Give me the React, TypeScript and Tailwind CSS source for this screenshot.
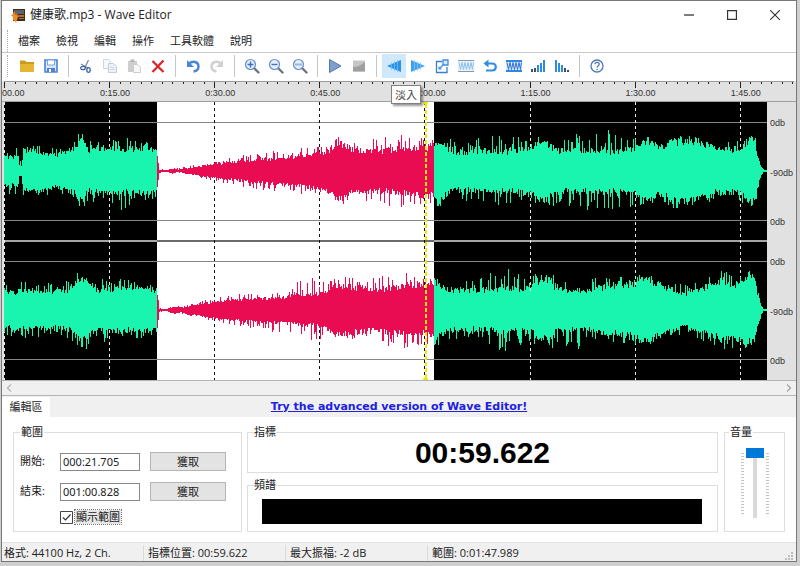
import { ReactNode } from "react";

const WIDTH = 763;
const HEIGHT = 278;
const MAJOR = 105.1;
const SELECTION = { from: 153, to: 430 };
const CURSOR = 421;

const LABELS = [
  "00.00",
  "0:15.00",
  "0:30.00",
  "0:45.00",
  "1:00.00",
  "1:15.00",
  "1:30.00",
  "1:45.00",
];

// [x, body, peak] half heights of the signal
type Key = [number, number, number];

const LEFT: Key[] = [
  [0, 14, 23],
  [1, 12, 23],
  [14, 13, 23],
  [15, 4, 12],
  [17, 4, 14],
  [19, 17, 24],
  [30, 18, 28],
  [52, 14, 22],
  [70, 19, 30],
  [77, 27, 42],
  [84, 18, 32],
  [100, 20, 28],
  [118, 19, 40],
  [130, 20, 30],
  [145, 20, 32],
  [152, 18, 26],
  [153, 14, 18],
  [155, 1, 2],
  [162, 1, 1],
  [168, 2, 3],
  [174, 1, 3],
  [200, 5, 8],
  [230, 8, 15],
  [260, 10, 20],
  [300, 14, 23],
  [322, 17, 25],
  [334, 25, 36],
  [350, 18, 30],
  [375, 17, 33],
  [395, 20, 38],
  [425, 21, 32],
  [436, 24, 38],
  [452, 16, 28],
  [480, 18, 35],
  [505, 17, 37],
  [525, 21, 33],
  [540, 25, 40],
  [555, 18, 32],
  [580, 18, 40],
  [610, 17, 42],
  [630, 20, 35],
  [643, 28, 35],
  [655, 20, 27],
  [668, 26, 38],
  [690, 27, 38],
  [712, 19, 30],
  [735, 19, 30],
  [745, 28, 38],
  [751, 27, 38],
  [753, 14, 20],
  [757, 4, 5],
  [759, 1, 2],
  [763, 1, 1],
];

const RIGHT: Key[] = [
  [0, 15, 25],
  [20, 17, 29],
  [52, 16, 26],
  [68, 18, 32],
  [72, 25, 38],
  [82, 24, 40],
  [90, 18, 30],
  [100, 17, 32],
  [116, 19, 38],
  [125, 18, 30],
  [152, 18, 28],
  [153, 14, 18],
  [155, 1, 2],
  [162, 1, 1],
  [170, 3, 4],
  [178, 2, 4],
  [200, 6, 10],
  [230, 9, 15],
  [255, 10, 20],
  [285, 12, 27],
  [315, 14, 34],
  [322, 16, 26],
  [332, 21, 36],
  [350, 20, 32],
  [370, 18, 33],
  [390, 20, 40],
  [420, 21, 36],
  [432, 23, 40],
  [445, 18, 32],
  [465, 17, 30],
  [500, 18, 42],
  [528, 19, 36],
  [534, 26, 40],
  [546, 26, 40],
  [552, 18, 34],
  [580, 17, 42],
  [600, 20, 32],
  [625, 22, 34],
  [643, 27, 36],
  [660, 20, 27],
  [680, 14, 26],
  [700, 20, 32],
  [718, 26, 40],
  [730, 22, 38],
  [740, 30, 40],
  [750, 28, 40],
  [753, 15, 22],
  [757, 4, 5],
  [759, 1, 2],
  [763, 1, 1],
];

function envelope(keys: Key[], x: number) {
  let i = 1;
  while (i < keys.length - 1 && keys[i][0] < x) i++;
  const a = keys[i - 1];
  const b = keys[i];
  const t = Math.min(1, (x - a[0]) / (b[0] - a[0]));
  return [a[1] + (b[1] - a[1]) * t, a[2] + (b[2] - a[2]) * t];
}

function wavePath(keys: Key[], center: number, start: number, end: number, seed: number) {
  let state = seed + start;
  const random = () => {
    state = (state * 1103515245 + 12345) % 2147483648;
    return (state >> 8) / 8388608;
  };
  const level = (x: number) => {
    const [body, peak] = envelope(keys, x);
    if (random() < 0.38) return body + (peak - body) * random();
    return body * (0.95 + random() * 0.35);
  };
  let d = "";
  for (let x = start; x < end; x++) {
    const top = Math.max(1, Math.round(level(x)));
    const bottom = Math.max(1, Math.round(level(x)));
    d += `M${x} ${center - top}h1v${top + bottom}h-1z`;
  }
  return d;
}

const SECTIONS = [
  { start: 0, end: SELECTION.from, className: "fill-[#19f5ae]" },
  { start: SELECTION.from, end: SELECTION.to, className: "fill-[#e90c52]" },
  { start: SELECTION.to, end: WIDTH, className: "fill-[#19f5ae]" },
];

function Waveform() {
  return (
    <svg
      viewBox={`0 0 ${WIDTH} ${HEIGHT}`}
      preserveAspectRatio="none"
      className="block h-[278px] w-full min-w-0 flex-1"
    >
      <rect width={WIDTH} height={HEIGHT} fill="#000" />
      <rect
        x={SELECTION.from}
        width={SELECTION.to - SELECTION.from}
        height={HEIGHT}
        fill="#fff"
      />
      {[20, 118, 159, 257].map((y) => (
        <path key={y} d={`M0 ${y + 0.5}H${WIDTH}`} stroke="#85858a" />
      ))}
      <path d={`M0 139H${WIDTH}`} stroke="#a6a6a6" strokeWidth="2" />
      <path
        d={`M${SELECTION.from} 139H${SELECTION.to}`}
        stroke="#6b6b6b"
        strokeWidth="2"
      />
      {LABELS.map((label, i) => {
        const x = Math.round(i * MAJOR);
        const selected = x > SELECTION.from && x < SELECTION.to;
        return (
          <path
            key={label}
            d={`M${x + 0.5} 0V${HEIGHT}`}
            stroke={selected ? "#111" : "#e8e8e8"}
            strokeDasharray="3 3"
          />
        );
      })}
      {SECTIONS.map(({ start, end, className }) => (
        <g key={start} className={className}>
          <path d={wavePath(LEFT, 69, start, end, 71)} />
          <path d={wavePath(RIGHT, 208, start, end, 997)} />
        </g>
      ))}
      <path
        d={`M${CURSOR + 1} 0V${HEIGHT}`}
        stroke="#f0e800"
        strokeWidth="2"
        strokeDasharray="4 2"
        strokeDashoffset="-2"
      />
      <path d={`M${CURSOR - 2} 0h5v1l-2 2h-1l-2-2z`} fill="#f0e800" />
      <path d={`M${CURSOR - 2} ${HEIGHT}h5v-1l-2-2h-1l-2 2z`} fill="#f0e800" />
    </svg>
  );
}

function Ruler() {
  const ticks = Array.from({ length: 76 }, (_, i) => i);
  return (
    <div className="flex border-b border-[#a0a0a0] bg-[#e1e1e1] pr-[29px] pl-0.5">
      <div className="relative h-5 flex-1">
        <svg
          viewBox={`0 0 ${WIDTH} 20`}
          preserveAspectRatio="none"
          className="block h-5 w-full overflow-visible"
        >
          <path d="M0 .5H790" stroke="#9c9c9c" />
          {ticks.map((i) => (
            <rect
              key={i}
              x={Math.round((i * MAJOR) / 10)}
              y={1}
              width={1}
              height={i % 10 ? 2 : 6}
              fill="#222"
            />
          ))}
        </svg>
        {LABELS.map((label, i) => (
          <span
            key={label}
            className={`absolute top-1.5 font-['Liberation_Sans',sans-serif] text-[9px] leading-3 text-[#333] ${
              i === 0 ? "-ml-0.5" : "-ml-[9px]"
            }`}
            style={{ left: `${((i * MAJOR) / WIDTH) * 100}%` }}
          >
            {label}
          </span>
        ))}
      </div>
    </div>
  );
}

function Scale() {
  return (
    <div className="w-7 bg-[#e1e1e1] font-['Liberation_Sans',sans-serif] text-[9px] leading-3 text-[#333]">
      {["left", "right"].map((channel) => (
        <div key={channel} className="flex h-[139px] flex-col justify-between pt-[15px] pb-[13px] pl-[3px]">
          <span>0db</span>
          <span>-90db</span>
          <span>0db</span>
        </div>
      ))}
    </div>
  );
}

interface ToolProps {
  label: string;
  active?: boolean;
  children: ReactNode;
}

function Tool({ label, active, children }: ToolProps) {
  return (
    <button
      aria-label={label}
      className={`relative flex h-6 w-6 shrink-0 items-center justify-center ${
        active ? "bg-[#cfe8fb]" : ""
      }`}
    >
      <svg viewBox="0 0 16 16" className="h-4 w-4" fill="none">
        {children}
      </svg>
      {active && (
        <span className="absolute top-[31px] left-[9px] z-10 border border-[#808080] bg-white px-[3px] text-[11px] leading-[17px] whitespace-nowrap text-[#444] shadow-[2px_2px_2px_rgba(0,0,0,0.4)]">
          {label}
        </span>
      )}
    </button>
  );
}

function Separator() {
  return <span className="mx-[5px] h-[22px] w-px shrink-0 bg-[#c6c6c6]" />;
}

function Magnifier({ children }: { children?: ReactNode }) {
  return (
    <>
      <path d="M10.5 10.5l4 4" stroke="#6b7683" strokeWidth="2.4" strokeLinecap="round" />
      <circle cx="6.5" cy="6.5" r="5" fill="#e6f0fc" stroke="#6a8fc6" strokeWidth="1.2" />
      {children}
    </>
  );
}

function Zigzag({ color }: { color: string }) {
  return (
    <path
      d="M1 4.5l1.5 7 1.5-7 1.5 7 1.5-7 1.5 7 1.5-7 1.5 7 1.5-7 1.5 7 1-7"
      stroke={color}
    />
  );
}

function Grip() {
  return <span className="h-[22px] w-[3px] shrink-0 border-l border-dotted border-[#a8a8a8]" />;
}

function Toolbar() {
  return (
    <div className="flex h-7 items-center pb-0.5 pl-[5px]">
      <Grip />
      <div className="flex items-center pl-[5px]">
        <Tool label="開啟">
          <path d="M1 2.5h5L7.5 4H15v10H1z" fill="#cf9a1c" />
          <path d="M1 6h14v8H1z" fill="#e6b533" />
        </Tool>
        <Tool label="儲存">
          <path d="M2 2h12v12H2z" fill="#dbe8fb" stroke="#4b82d8" strokeWidth="1.6" />
          <path d="M4.5 2h7v5h-7z" fill="#fff" stroke="#7aa5e6" />
          <path d="M4 10h8v4H4z" fill="#4b82d8" />
          <path d="M6 11h2v3H6z" fill="#fff" />
        </Tool>
        <Separator />
        <Tool label="剪下">
          <path d="M10.5 2L7 9.5M3 6l7 4" stroke="#7c8ba1" strokeWidth="1.3" />
          <ellipse cx="5" cy="10" rx="2.3" ry="1.7" stroke="#3d64a8" strokeWidth="1.3" />
          <ellipse cx="10.5" cy="12" rx="1.7" ry="2.4" stroke="#3d64a8" strokeWidth="1.3" />
        </Tool>
        <Tool label="複製">
          <path d="M1.5 1.5h5l2 2v7h-7z" fill="#f6f8fb" stroke="#cdd5e2" />
          <path d="M6.5 5.5h5l3 3v6h-8z" fill="#eef2f8" stroke="#c2cddd" />
          <path d="M8 9.5h4M8 11.5h5" stroke="#cdd8e8" />
        </Tool>
        <Tool label="貼上">
          <path d="M2 3h9v11H2z" fill="#cfcfcf" />
          <path d="M4.5 1.5h4V4h-4z" fill="#b5b5b5" />
          <path d="M7.5 6.5h4l3 3v5h-7z" fill="#f7f7f7" stroke="#cdcdcd" />
        </Tool>
        <Tool label="刪除">
          <path d="M2.5 3l11 11M13.5 2.5L2.5 14" stroke="#d9262c" strokeWidth="2.3" />
        </Tool>
        <Separator />
        <Tool label="復原">
          <path d="M4 5.5c4-3.5 9.5-1.5 9.5 3 0 3-2 4.5-5 5" stroke="#4a86d6" strokeWidth="2.4" />
          <path d="M2 2v7h7z" fill="#4a86d6" />
        </Tool>
        <Tool label="重做">
          <path d="M12 5.5c-4-3.5-9.5-1.5-9.5 3 0 3 2 4.5 5 5" stroke="#d0d0d0" strokeWidth="2.4" />
          <path d="M14 2v7H7z" fill="#d0d0d0" />
        </Tool>
        <Separator />
        <Tool label="放大">
          <Magnifier>
            <path d="M3.5 6.5h6M6.5 3.5v6" stroke="#3d6fc4" strokeWidth="1.4" />
          </Magnifier>
        </Tool>
        <Tool label="縮小">
          <Magnifier>
            <path d="M3.5 6.5h6" stroke="#3d6fc4" strokeWidth="1.4" />
          </Magnifier>
        </Tool>
        <Tool label="全部顯示">
          <Magnifier>
            <path d="M3 5.5h7v2H3z" fill="#9db4dc" />
          </Magnifier>
        </Tool>
        <Separator />
        <Tool label="播放">
          <path d="M2.5 1.5L14 8 2.5 14.5z" fill="#7f9fce" stroke="#5677aa" />
        </Tool>
        <Tool label="停止">
          <path d="M2 2.5h12v11H2z" fill="#c6c6c6" />
          <path d="M2 13.5V9c5 0 8-2 12-5v9.5z" fill="#9f9f9f" />
        </Tool>
        <Separator />
        <Tool label="淡入" active>
          <path d="M1 8l14-6v12z" fill="#2b93e6" />
          <path d="M5.5 4v8M8.5 3v10M11.5 2v12" stroke="#7cc0f4" strokeWidth=".7" />
        </Tool>
        <Tool label="淡出">
          <path d="M15 8L1 2v12z" fill="#3fa2ee" />
          <path d="M10.5 4v8M7.5 3v10M4.5 2v12" stroke="#8ccaf7" strokeWidth=".7" />
        </Tool>
        <Tool label="插入">
          <path d="M8 3.5H2.5v11H13V9" stroke="#3b7fc9" strokeWidth="1.3" />
          <path d="M9 2h5v5H9z" fill="#d8ecff" stroke="#3b8fe0" strokeWidth="1.3" />
          <path d="M9 7l-3 3" stroke="#3b8fe0" strokeWidth="1.3" />
          <path d="M4.5 8v3.5H8z" fill="#3b8fe0" />
        </Tool>
        <Tool label="靜音">
          <path d="M0 2.5h16M0 13.5h16" stroke="#8b98a6" />
          <path d="M0 3h16v10H0z" fill="#e6f2fc" />
          <Zigzag color="#8cc0ec" />
        </Tool>
        <Tool label="反轉">
          <path d="M3 5.5h7c5 0 5 7 0 7H4" stroke="#2f8fe0" strokeWidth="2.2" />
          <path d="M6.5 1.5v8l-5-4z" fill="#2f8fe0" />
        </Tool>
        <Tool label="正常化">
          <path d="M0 2h16v12H0z" fill="#2f86e4" />
          <path d="M0 4h16v8H0z" fill="#d8eafc" />
          <Zigzag color="#2f6fd0" />
        </Tool>
        <Tool label="提高音量">
          <path d="M1 11h2v3H1zM4 10h2v4H4z" fill="#3c4f66" />
          <path d="M7 7h2v7H7zM10 5h2v9h-2zM13 2h2v12h-2z" fill="#2f8be0" />
        </Tool>
        <Tool label="降低音量">
          <path d="M1 2h2v12H1zM4 5h2v9H4zM7 7h2v7H7z" fill="#2f8be0" />
          <path d="M10 10h2v4h-2zM13 12h2v2h-2z" fill="#3c4f66" />
        </Tool>
        <Separator />
        <Tool label="說明">
          <circle cx="8" cy="8" r="6" stroke="#4a79ba" strokeWidth="1.3" />
          <path d="M6 6.3c0-2.6 4.2-2.6 4.2 0 0 1.5-2.1 1.5-2.1 3.3" stroke="#4a79ba" strokeWidth="1.3" />
          <path d="M7.5 10.7h1.3V12H7.5z" fill="#4a79ba" />
        </Tool>
      </div>
    </div>
  );
}

function TitleBar() {
  return (
    <header className="flex h-7 items-center justify-between pl-[9px]">
      <div className="flex items-center gap-1">
        <svg viewBox="0 0 15 15" className="h-[15px] w-[15px]">
          <path d="M2 1h12v12H2z" fill="#3b2a20" />
          <path d="M3 2h10v4H3z" fill="#5c636b" />
          <path d="M0 7l2-1 1-3 2 4 1-2 1 4-1 3-1 3-1-2-2-1 0-3z" fill="#f08a24" />
          <path d="M7 7h6v2H7zM8 10h5v1H8z" fill="#b96a35" />
        </svg>
        <h1 className="text-xs text-[#222]">健康歌.mp3 - Wave Editor</h1>
      </div>
      <div className="flex">
        <button aria-label="最小化" className="flex h-7 w-[43px] items-center justify-center">
          <svg viewBox="0 0 10 10" className="h-2.5 w-2.5">
            <path d="M0 5h10" stroke="#333" strokeWidth="1.3" />
          </svg>
        </button>
        <button aria-label="最大化" className="flex h-7 w-[43px] items-center justify-center">
          <svg viewBox="0 0 10 10" className="h-2.5 w-2.5">
            <path d="M.5.5h9v9h-9z" fill="none" stroke="#333" strokeWidth="1.3" />
          </svg>
        </button>
        <button aria-label="關閉" className="flex h-7 w-[43px] items-center justify-center">
          <svg viewBox="0 0 10 10" className="h-2.5 w-2.5">
            <path d="M0 0l10 10M10 0L0 10" stroke="#333" strokeWidth="1.1" />
          </svg>
        </button>
      </div>
    </header>
  );
}

function Menu() {
  return (
    <nav className="flex h-6 items-center border-b border-[#c8c8c8] pl-[5px]">
      <Grip />
      <div className="flex gap-4 pt-0.5 pl-2">
        {["檔案", "檢視", "編輯", "操作", "工具軟體", "說明"].map((item) => (
          <button key={item}>{item}</button>
        ))}
      </div>
    </nav>
  );
}

function ScrollBar() {
  return (
    <div className="flex h-4 items-center justify-between border-y border-[#b4b4b4] bg-[#f0f0f0] px-1">
      <button aria-label="向左">
        <svg viewBox="0 0 6 8" className="h-2 w-1.5" fill="none">
          <path d="M5 .5L1.5 4 5 7.5" stroke="#b8b8b8" strokeWidth="1.4" />
        </svg>
      </button>
      <button aria-label="向右">
        <svg viewBox="0 0 6 8" className="h-2 w-1.5" fill="none">
          <path d="M1 .5L4.5 4 1 7.5" stroke="#a8a8a8" strokeWidth="1.4" />
        </svg>
      </button>
    </div>
  );
}

interface RangeFieldProps {
  id: string;
  label: string;
  value: string;
}

function RangeField({ id, label, value }: RangeFieldProps) {
  return (
    <div className="flex items-center">
      <label htmlFor={id} className="w-10">
        {label}
      </label>
      <input
        id={id}
        defaultValue={value}
        className="h-[18px] w-20 border border-[#8a8a8a] bg-white px-0.5 font-['Noto_Sans',sans-serif] text-[11px]"
      />
      <button className="ml-2.5 h-[19px] w-[76px] border border-[#b4b4b4] bg-[#e3e3e3] leading-4">
        獲取
      </button>
    </div>
  );
}

function VolumeTicks() {
  return (
    <span className="h-[61px] w-[3px] bg-[repeating-linear-gradient(to_bottom,#c4c4c4_0_1px,transparent_1px_3px)]" />
  );
}

function Volume() {
  return (
    <fieldset className="h-[107px] w-[61px] border border-[#dedede]">
      <legend className="ml-1 px-px leading-[14px]">
        <label htmlFor="volume">音量</label>
      </legend>
      <div className="flex items-center justify-center gap-0.5 pt-[9px]">
        <VolumeTicks />
        <input
          id="volume"
          type="range"
          defaultValue={100}
          className="h-[70px] w-[18px] appearance-none bg-[linear-gradient(to_right,transparent_7px,#d9d9d9_7px_11px,transparent_11px)] [direction:rtl] [writing-mode:vertical-lr] [&::-webkit-slider-thumb]:h-2.5 [&::-webkit-slider-thumb]:w-[18px] [&::-webkit-slider-thumb]:appearance-none [&::-webkit-slider-thumb]:bg-[#0078d7]"
        />
        <VolumeTicks />
      </div>
    </fieldset>
  );
}

function EditPanel() {
  return (
    <section className="flex bg-white px-[11px] pt-2 pb-2.5">
      <fieldset className="h-[107px] w-[229px] border border-[#dedede] pl-1.5">
        <legend className="px-px leading-[14px]">範圍</legend>
        <div className="flex flex-col gap-[11px] pt-[13px]">
          <RangeField id="start" label="開始:" value="000:21.705" />
          <RangeField id="end" label="結束:" value="001:00.828" />
        </div>
        <label className="mt-[9px] ml-10 flex w-fit items-center gap-0.5 leading-[14px]">
          <input
            type="checkbox"
            defaultChecked
            className="absolute h-[13px] w-[13px] appearance-none opacity-0"
          />
          <svg viewBox="0 0 13 13" className="h-[13px] w-[13px]" fill="none">
            <path d="M.5.5h12v12H.5z" fill="#fff" stroke="#444" />
            <path d="M3 6.5L5.5 9l5-5.5" stroke="#333" strokeWidth="1.2" />
          </svg>
          <span className="bg-[#e6e6e6] px-px outline outline-dotted outline-[#777]">顯示範圍</span>
        </label>
      </fieldset>
      <div className="ml-[5px] flex min-w-0 flex-1 flex-col justify-between">
        <fieldset className="h-12 border border-[#dedede]">
          <legend className="ml-1.5 leading-[14px]">指標</legend>
          <p className="text-center font-['Liberation_Sans',sans-serif] text-[30px] leading-[28px] font-bold text-black">
            00:59.622
          </p>
        </fieldset>
        <fieldset className="h-[54px] border border-[#dedede]">
          <legend className="ml-1.5 leading-[14px]">頻譜</legend>
          <div className="mt-[7px] mr-[15px] ml-3.5 h-[25px] bg-black" />
        </fieldset>
      </div>
      <div className="ml-[6px]">
        <Volume />
      </div>
    </section>
  );
}

function StatusBar() {
  return (
    <footer className="flex h-[19px] items-center border-t border-[#e2e2e2] bg-[#f0f0f0] pt-0.5 text-[#222]">
      <span className="w-[141px] pl-0.5">格式: 44100 Hz, 2 Ch.</span>
      <span className="w-[142px] border-l border-[#dadada] pl-1">指標位置: 00:59.622</span>
      <span className="w-[142px] border-l border-[#dadada] pl-1">最大振福: -2 dB</span>
      <span className="flex-1 border-l border-[#dadada] pl-1">範圍: 0:01:47.989</span>
      <svg viewBox="0 0 9 9" className="mr-0.5 h-[9px] w-[9px] self-end">
        <path d="M6 0h2v2H6zM3 3h2v2H3zM6 3h2v2H6zM0 6h2v2H0zM3 6h2v2H3zM6 6h2v2H6z" fill="#bdbdbd" />
      </svg>
    </footer>
  );
}

export default function App() {
  return (
    <div className="min-h-screen bg-[#cfcfcf] pr-[3px] pb-[3px] pl-px font-['Open_Sans','Noto_Sans_CJK_TC',sans-serif] text-[11px] text-[#222]">
      <main className="border border-[#777] bg-white">
        <TitleBar />
        <Menu />
        <Toolbar />
        <Ruler />
        <div className="flex bg-[#e1e1e1] pr-px pl-0.5">
          <Waveform />
          <Scale />
        </div>
        <ScrollBar />
        <div className="flex h-[21px] items-end bg-[#f0f0f0]">
          <button className="h-5 w-12 bg-white text-center">編輯區</button>
          <div className="-ml-12 flex-1 self-center text-center">
            <a
              href="#"
              className="font-['DejaVu_Sans',sans-serif] text-[11px] font-bold text-[#2020e0] underline"
            >
              Try the advanced version of Wave Editor!
            </a>
          </div>
        </div>
        <EditPanel />
        <StatusBar />
      </main>
    </div>
  );
}
